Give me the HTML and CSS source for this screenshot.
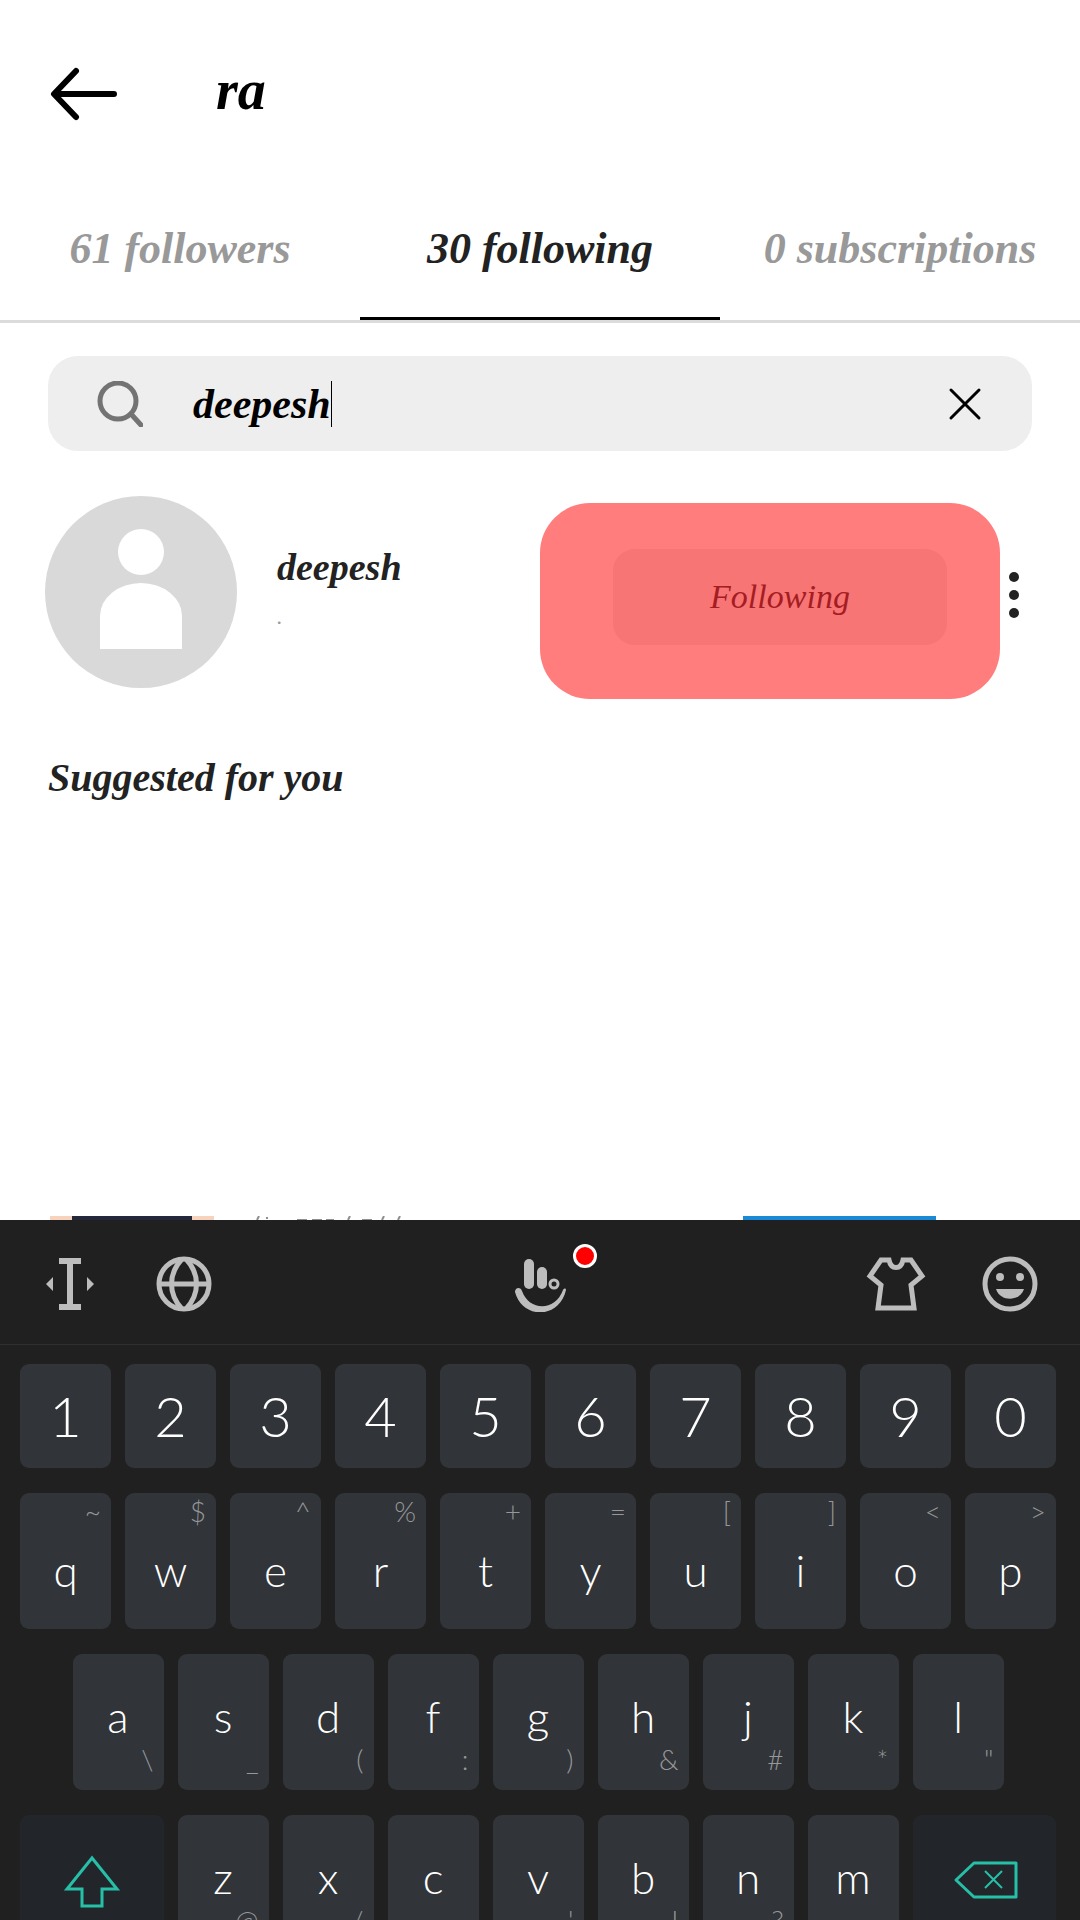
FILE: index.html
```
<!DOCTYPE html>
<html lang="en">
<head>
    <meta charset="UTF-8">
    <meta name="viewport" content="width=device-width, initial-scale=1.0">
    <title>Following</title>
    <link rel="stylesheet" href="styles.css">
</head>
<body>
    <header class="top-bar">
        <button class="icon-button" type="button" aria-label="Back">
            <svg width="68" height="54" viewBox="0 0 68 54" fill="none" stroke="#000" stroke-width="6" stroke-linecap="round" stroke-linejoin="round">
                <path d="M64 27H5M26 4L4 27l22 23"/>
            </svg>
        </button>
        <h1>ra</h1>
    </header>

    <nav class="tabs">
        <a href="#followers">61 followers</a>
        <a href="#following" class="active">30 following</a>
        <a href="#subscriptions">0 subscriptions</a>
    </nav>

    <main>
        <form class="search">
            <svg width="46" height="46" viewBox="0 0 46 46" fill="none" stroke="#737373" stroke-width="5" stroke-linecap="round">
                <circle cx="21" cy="20" r="18"/>
                <path d="M34 33l10 11"/>
            </svg>
            <label class="search-text">
                <input type="text" value="deepesh" size="7" aria-label="Search">
            </label>
            <button class="icon-button" type="button" aria-label="Clear search">
                <svg width="34" height="34" viewBox="0 0 34 34" fill="none" stroke="#000" stroke-width="3" stroke-linecap="round">
                    <path d="M3 3l28 28M31 3L3 31"/>
                </svg>
            </button>
        </form>

        <section class="user">
            <svg class="avatar" width="192" height="192" viewBox="0 0 192 192">
                <circle cx="96" cy="96" r="96" fill="#d9d9d9"/>
                <circle cx="96" cy="56" r="23" fill="#fff"/>
                <path d="M55 153v-33a41 33 0 0 1 82 0v33z" fill="#fff"/>
            </svg>
            <div class="user-text">
                <p class="name">deepesh</p>
                <p class="full-name">.</p>
            </div>
            <div class="highlight">
                <button class="following" type="button">Following</button>
            </div>
            <button class="icon-button" type="button" aria-label="More options">
                <svg width="10" height="48" viewBox="0 0 10 48" fill="#222">
                    <circle cx="5" cy="6" r="5"/>
                    <circle cx="5" cy="24" r="5"/>
                    <circle cx="5" cy="42" r="5"/>
                </svg>
            </button>
        </section>

        <h2>Suggested for you</h2>
    </main>

    <!-- top edge of the next row, hidden behind the keyboard -->
    <div class="next-row">
        <span class="peek-photo"></span>
        <svg class="peek-text" width="210" height="4" viewBox="0 0 210 4" stroke="#8e8e8e" stroke-width="2">
            <path d="M3 4l2-4M12 2h2M43 4h10M58 4h10M72 4h8M94 4l2-4M108 4h10M128 4l2-4M144 4l2-4" stroke-linecap="butt"/>
        </svg>
        <span class="peek-button"></span>
    </div>

    <section class="keyboard">
        <div class="tools">
            <button type="button" aria-label="Move cursor">
                <svg width="56" height="56" viewBox="0 0 56 56" fill="#bdbdbd">
                    <path d="M17 2h22v6h-8v40h8v6H17v-6h8V8h-8zM11 21v14l-7-7zM45 21v14l7-7z"/>
                </svg>
            </button>
            <button type="button" aria-label="Language">
                <svg width="56" height="56" viewBox="0 0 56 56" fill="none" stroke="#bdbdbd" stroke-width="5">
                    <circle cx="28" cy="28" r="25"/>
                    <path d="M3 28h50M26 3C12 18 12 38 26 53M30 3c14 15 14 35 0 50"/>
                </svg>
            </button>
            <button class="logo" type="button" aria-label="Keyboard menu">
                <svg width="56" height="56" viewBox="0 0 56 56" fill="none" stroke="#bdbdbd" stroke-linecap="round">
                    <path d="M17 8v20" stroke-width="10"/>
                    <path d="M30 16v12" stroke-width="10"/>
                    <circle cx="42" cy="28" r="4" stroke-width="3"/>
                    <path d="M3 36c0-5 6-5 7-1 7 20 33 21 41-1 1-2 3-2 3 0-7 30-44 29-51 2z" fill="#bdbdbd" stroke="none"/>
                </svg>
                <span class="badge"></span>
            </button>
            <button type="button" aria-label="Themes">
                <svg class="shirt" width="56" height="56" viewBox="2 0 56 56" fill="none" stroke="#bdbdbd" stroke-width="5">
                    <path d="M15 4h8c2 10 12 10 14 0h8l11 16-11 9 3 23H12l3-23L4 20z"/>
                </svg>
            </button>
            <button type="button" aria-label="Emoji">
                <svg width="56" height="56" viewBox="0 0 56 56">
                    <circle cx="28" cy="28" r="25" fill="none" stroke="#bdbdbd" stroke-width="5"/>
                    <circle cx="18" cy="21" r="4" fill="#bdbdbd"/>
                    <circle cx="38" cy="21" r="4" fill="#bdbdbd"/>
                    <path d="M14 33h28c-4 13-24 13-28 0z" fill="#bdbdbd"/>
                </svg>
            </button>
        </div>

        <div class="keys">
            <button class="key num">1</button>
            <button class="key num">2</button>
            <button class="key num">3</button>
            <button class="key num">4</button>
            <button class="key num">5</button>
            <button class="key num">6</button>
            <button class="key num">7</button>
            <button class="key num">8</button>
            <button class="key num">9</button>
            <button class="key num">0</button>

            <button class="key upper"><small>~</small>q</button>
            <button class="key upper"><small>$</small>w</button>
            <button class="key upper"><small>^</small>e</button>
            <button class="key upper"><small>%</small>r</button>
            <button class="key upper"><small>+</small>t</button>
            <button class="key upper"><small>=</small>y</button>
            <button class="key upper"><small>[</small>u</button>
            <button class="key upper"><small>]</small>i</button>
            <button class="key upper"><small>&lt;</small>o</button>
            <button class="key upper"><small>&gt;</small>p</button>

            <button class="key first">a<small>\</small></button>
            <button class="key">s<small>_</small></button>
            <button class="key">d<small>(</small></button>
            <button class="key">f<small>:</small></button>
            <button class="key">g<small>)</small></button>
            <button class="key">h<small>&amp;</small></button>
            <button class="key">j<small>#</small></button>
            <button class="key">k<small>*</small></button>
            <button class="key">l<small>"</small></button>

            <button class="key wide" aria-label="Shift">
                <svg width="60" height="54" viewBox="0 0 60 54" fill="none" stroke="#26bfa8" stroke-width="3">
                    <path d="M30 3L5 34h15v17h20V34h15z"/>
                </svg>
            </button>
            <button class="key">z<small>@</small></button>
            <button class="key">x<small>/</small></button>
            <button class="key">c</button>
            <button class="key">v<small>'</small></button>
            <button class="key">b<small>!</small></button>
            <button class="key">n<small>?</small></button>
            <button class="key">m</button>
            <button class="key wide delete" aria-label="Backspace">
                <svg width="66" height="40" viewBox="0 0 66 40" fill="none" stroke="#26bfa8" stroke-width="3" stroke-linejoin="round">
                    <path d="M3 20L21 3h42v34H21z"/>
                    <path d="M32 11l17 17M49 11L32 28" stroke-width="2"/>
                </svg>
            </button>
        </div>
    </section>
</body>
</html>
```
FILE: styles.css
```
* {
    box-sizing: border-box;
    margin: 0;
    padding: 0;
}

body {
    display: flex;
    flex-direction: column;
    height: 100vh;
    overflow: hidden;
    font-family: "Liberation Serif", "Times New Roman", serif;
    font-style: italic;
    color: #222;
    background-color: #fff;
}
button {
    border: none;
    background: none;
    font: inherit;
    color: inherit;
    cursor: pointer;
}
svg {
    display: block;
    flex-shrink: 0;
}

.top-bar {
    display: flex;
    align-items: center;
    gap: 98px;
    height: 188px;
    padding: 0 50px;
}
.top-bar h1 {
    padding-bottom: 8px;
    font-size: 56px;
    line-height: 64px;
    color: #000;
}

.tabs {
    display: grid;
    grid-template-columns: repeat(3, 1fr);
    border-bottom: 3px solid #dbdbdb;
}
.tabs a {
    height: 132px;
    padding-top: 36px;
    border-bottom: 3px solid transparent;
    font-size: 44px;
    font-weight: bold;
    line-height: 50px;
    text-align: center;
    text-decoration: none;
    color: #999;
}
.tabs .active {
    color: #222;
    border-color: #000;
}

main {
    flex-shrink: 0;
    height: 893px;
    padding: 33px 48px 0;
}
.search {
    display: flex;
    align-items: center;
    height: 95px;
    padding: 0 50px 0 49px;
    border-radius: 30px;
    background-color: #eee;
}
.search-text {
    display: flex;
    flex: 1;
    align-items: center;
    margin-left: 50px;
}
.search-text::after {
    content: "";
    width: 1px;
    height: 46px;
    background-color: #000;
}
.search input {
    field-sizing: content;
    border: none;
    outline: none;
    background: none;
    font: inherit;
    font-size: 42px;
    font-weight: bold;
    line-height: 48px;
    color: #000;
}

.user {
    display: flex;
    align-items: center;
    margin: 45px -3px 0;
}
.avatar {
    margin-bottom: 12px;
}
.user-text {
    flex: 1;
    margin: 0 0 12px 40px;
}
.name {
    font-size: 38px;
    font-weight: bold;
    line-height: 50px;
}
.full-name {
    font-size: 22px;
    line-height: 50px;
    color: #999;
}
.highlight {
    width: 460px;
    padding: 46px 53px 54px 73px;
    margin: 6px 9px 0 0;
    border-radius: 50px;
    background-color: #ff7d7d;
}
.following {
    width: 100%;
    height: 96px;
    border-radius: 22px;
    font-size: 34px;
    color: #a51d22;
    background-color: #f87575;
}
.user .icon-button {
    margin: 0 16px 6px 0;
}

h2 {
    margin-top: 55px;
    font-size: 40px;
    line-height: 46px;
}

.next-row {
    display: flex;
    flex-shrink: 0;
    height: 4px;
    padding: 0 144px 0 50px;
}
.peek-photo {
    width: 164px;
    border: solid #f7d3bd;
    border-width: 0 22px;
    background-color: #23283a;
}
.peek-text {
    margin: 0 auto 0 40px;
}
.peek-button {
    width: 193px;
    background-color: #1a8ad6;
}

.keyboard {
    flex: 1;
    min-height: 0;
    overflow: hidden;
    font-family: Lato, "Liberation Sans", sans-serif;
    font-style: normal;
    font-weight: 300;
    color: #fff;
    background-color: #202020;
}
.tools {
    display: flex;
    align-items: center;
    gap: 58px;
    height: 125px;
    padding: 4px 42px 0;
    border-bottom: 1px solid #303030;
}
.tools .logo {
    position: relative;
    margin: 0 auto;
}
.shirt {
    overflow: visible;
}
.badge {
    position: absolute;
    top: -12px;
    right: -29px;
    width: 24px;
    height: 24px;
    border: 3px solid #fff;
    border-radius: 50%;
    background-color: #f00;
}

.keys {
    display: grid;
    grid-template-columns: repeat(20, 1fr);
    grid-template-rows: 104px;
    grid-auto-rows: 136px;
    gap: 25px 14px;
    padding: 19px 24px 0 20px;
}
.key {
    display: flex;
    flex-direction: column;
    align-items: center;
    grid-column: span 2;
    padding-top: 37px;
    border-radius: 9px;
    font-size: 44px;
    line-height: 50px;
    background-color: #313438;
}
.key small {
    align-self: flex-end;
    padding-right: 10px;
    font-size: 28px;
    line-height: 36px;
    color: #96989a;
}
.num {
    padding-top: 20px;
    font-size: 56px;
    line-height: 64px;
}
.upper {
    padding-top: 0;
}
.upper small {
    margin-bottom: 16px;
}
.first {
    grid-column: 2 / span 2;
}
.wide {
    grid-column: span 3;
    padding-top: 40px;
    background-color: #22262a;
}
.delete {
    padding: 45px 0 0 4px;
}
```
